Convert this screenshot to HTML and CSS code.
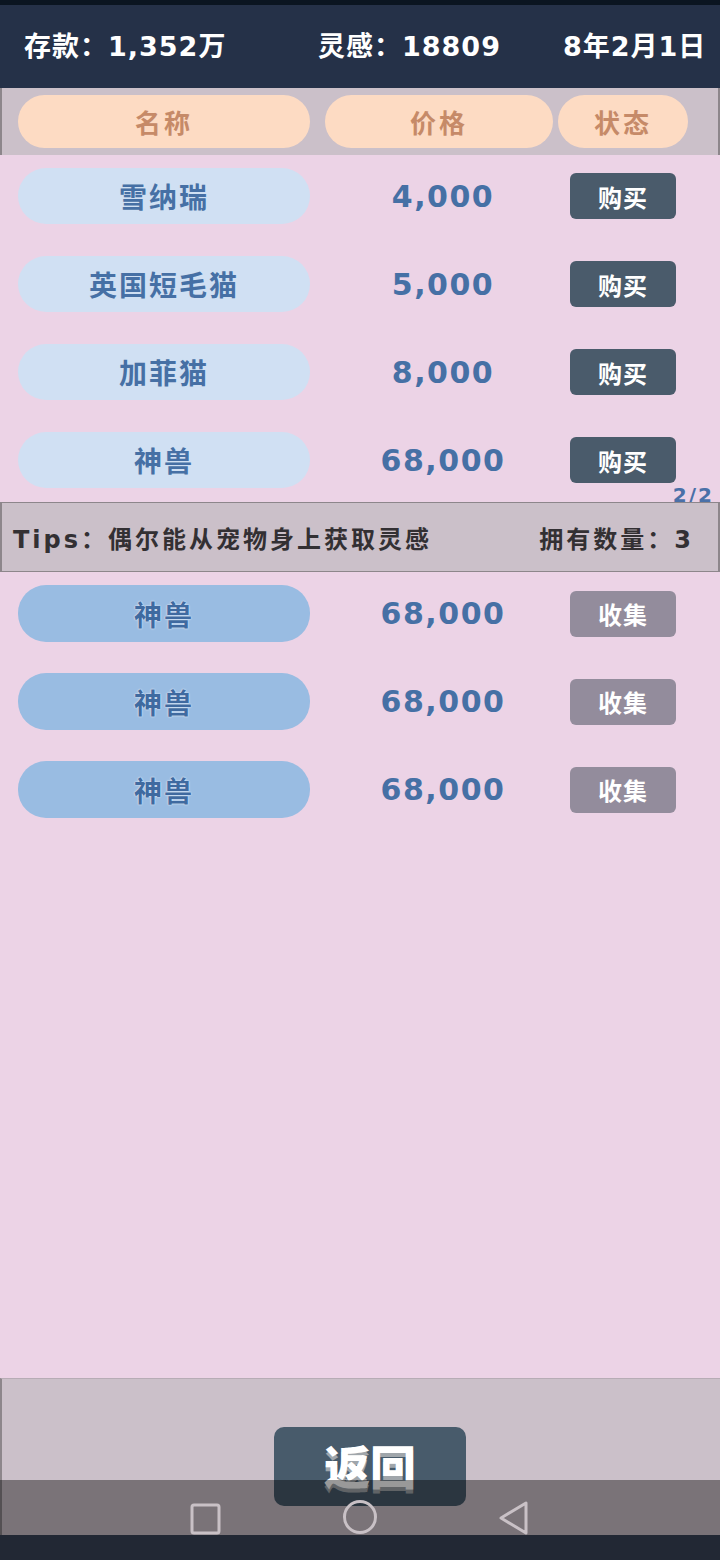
FILE: index.html
```html
<!DOCTYPE html>
<html lang="zh-CN">
<head>
  <meta charset="UTF-8">
  <title>宠物商店</title>
  <link rel="stylesheet" href="styles.css">
</head>
<body>
  <div class="screen">
    <div class="statusbar"></div>

    <div class="topbar">
      <span class="money">存款：1,352万</span>
      <span class="idea">灵感：18809</span>
      <span class="date">8年2月1日</span>
    </div>

    <div class="thead">
      <div class="th th-name">名称</div>
      <div class="th th-price">价格</div>
      <div class="th th-state">状态</div>
    </div>

    <div class="shop">
      <div class="row">
        <div class="name">雪纳瑞</div>
        <div class="price">4,000</div>
        <button class="btn buy">购买</button>
      </div>
      <div class="row">
        <div class="name">英国短毛猫</div>
        <div class="price">5,000</div>
        <button class="btn buy">购买</button>
      </div>
      <div class="row">
        <div class="name">加菲猫</div>
        <div class="price">8,000</div>
        <button class="btn buy">购买</button>
      </div>
      <div class="row">
        <div class="name">神兽</div>
        <div class="price">68,000</div>
        <button class="btn buy">购买</button>
      </div>
      <div class="pager">2/2</div>
    </div>

    <div class="tips">
      <span>Tips：偶尔能从宠物身上获取灵感</span>
      <span>拥有数量：3</span>
    </div>

    <div class="owned">
      <div class="row">
        <div class="name dark">神兽</div>
        <div class="price">68,000</div>
        <button class="btn collect">收集</button>
      </div>
      <div class="row">
        <div class="name dark">神兽</div>
        <div class="price">68,000</div>
        <button class="btn collect">收集</button>
      </div>
      <div class="row">
        <div class="name dark">神兽</div>
        <div class="price">68,000</div>
        <button class="btn collect">收集</button>
      </div>
    </div>

    <div class="footer">
      <button class="back">返回</button>
    </div>

    <div class="bottom-strip"></div>

    <!-- system navigation overlay -->
    <div class="navbar">
      <svg width="32" height="32" viewBox="0 0 32 32"><rect x="2" y="2" width="27" height="28" rx="2" fill="none" stroke="#c9c1c6" stroke-width="3"/></svg>
      <svg width="36" height="36" viewBox="0 0 36 36"><circle cx="18" cy="18" r="15.5" fill="none" stroke="#c9c1c6" stroke-width="3"/></svg>
      <svg width="32" height="34" viewBox="0 0 32 34"><path d="M28 2 L28 32 L3 17 Z" fill="none" stroke="#c9c1c6" stroke-width="3" stroke-linejoin="round"/></svg>
    </div>
  </div>
</body>
</html>
```

FILE: styles.css
```css
* {
  box-sizing: border-box;
  margin: 0;
  padding: 0;
}

body {
  font-family: "DejaVu Sans", "Noto Sans CJK SC", sans-serif;
  font-weight: bold;
  background: #222834;
}

.screen {
  position: relative;
  width: 720px;
  height: 1560px;
  display: flex;
  flex-direction: column;
  overflow: hidden;
  background: #ecd3e6;
}

.statusbar {
  height: 5px;
  background: #0b1521;
}

.topbar {
  height: 83px;
  background: #253148;
  color: #ffffff;
  font-size: 27px;
  letter-spacing: 1px;
  display: flex;
  align-items: center;
  padding: 0 0 4px 24px;
  white-space: nowrap;
}

.money {
  width: 294px;
}

.idea {
  width: 245px;
}

.thead {
  height: 67px;
  background: #cbc0c9;
  border-left: 2px solid #8d868b;
  border-right: 2px solid #8d868b;
  display: flex;
  align-items: flex-start;
  padding: 7px 0 0 16px;
}

.th {
  height: 53px;
  border-radius: 27px;
  background: #fddbc3;
  color: #c68a68;
  font-size: 26px;
  letter-spacing: 3px;
  display: flex;
  align-items: center;
  justify-content: center;
}

.th-name {
  width: 292px;
}

.th-price {
  width: 228px;
  margin-left: 15px;
}

.th-state {
  width: 130px;
  margin-left: 5px;
}

.shop {
  display: flex;
  flex-direction: column;
  gap: 32px;
  padding-top: 13px;
}

.shop .row {
  height: 56px;
}

.row {
  display: grid;
  grid-template-columns: 292px 1fr 106px;
  align-items: center;
  padding: 0 44px 0 18px;
}

.name {
  height: 100%;
  border-radius: 28px;
  background: #d0e0f3;
  color: #4670a5;
  font-size: 28px;
  letter-spacing: 2px;
  display: flex;
  align-items: center;
  justify-content: center;
}

.name.dark {
  background: #99bce2;
  color: #3f6aa0;
  text-shadow: 0 0 2px #e8f0fa, 0 0 1px #e8f0fa;
}

.price {
  text-align: center;
  padding-left: 6px;
  color: #4670a5;
  font-size: 30px;
  letter-spacing: 1.5px;
}

.btn {
  height: 46px;
  border: none;
  border-radius: 6px;
  font-family: inherit;
  font-weight: bold;
  font-size: 24px;
  letter-spacing: 1px;
  color: #ffffff;
}

.buy {
  background: #4a5b6b;
}

.collect {
  background: #938c9c;
}

.pager {
  margin-top: -32px;
  height: 14px;
  line-height: 14px;
  text-align: right;
  padding-right: 6px;
  color: #4a70a8;
  font-size: 20px;
  letter-spacing: 2px;
}

.tips {
  height: 70px;
  background: #cbc0c9;
  border: 2px solid #8d868b;
  border-top-width: 1px;
  border-bottom-width: 1px;
  color: #333033;
  font-size: 24px;
  letter-spacing: 3px;
  display: flex;
  align-items: center;
  justify-content: space-between;
  padding: 0 24px 0 11px;
  white-space: nowrap;
}

.owned {
  flex: 1;
  display: flex;
  flex-direction: column;
  gap: 31px;
  padding-top: 13px;
}

.owned .row {
  height: 57px;
}

.footer {
  height: 157px;
  background: #cbc0c9;
  border-top: 1px solid #b7acb5;
  border-left: 2px solid #8d868b;
  display: flex;
  padding: 48px 0 0 272px;
}

.back {
  width: 192px;
  height: 79px;
  border: none;
  border-radius: 10px;
  background: #485b6b;
  color: #ffffff;
  font-family: "Noto Sans CJK SC", sans-serif;
  font-weight: 900;
  font-size: 46px;
  padding-bottom: 6px;
  text-shadow: 0 4px 0 #a0a6ab;
}

.bottom-strip {
  height: 25px;
  background: #222834;
}

.navbar {
  position: absolute;
  left: 0;
  right: 0;
  bottom: 25px;
  height: 55px;
  background: rgba(0, 0, 0, 0.4);
  display: flex;
  align-items: flex-end;
  justify-content: center;
  gap: 120px;
}
```
